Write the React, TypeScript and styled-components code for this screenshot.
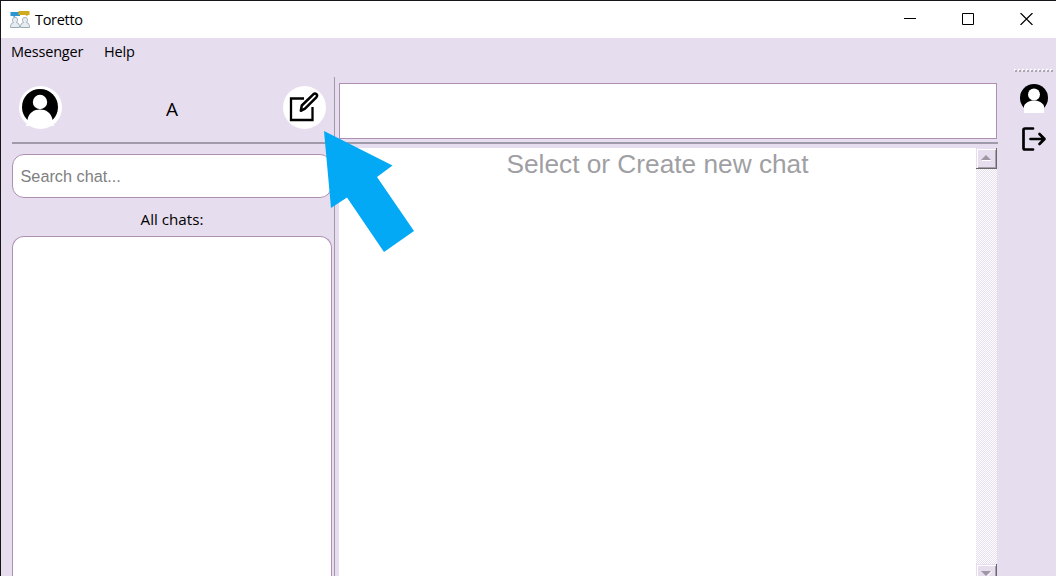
import React from 'react';
import styled, { createGlobalStyle } from 'styled-components';

const LILAC = '#e6ddee';
const BORDER = '#b08fb5';
const RULE = '#a09aaa';

const GlobalStyle = createGlobalStyle`
  * { box-sizing: border-box; }
  body { margin: 0; overflow: hidden; }
`;

const Window = styled.div`
  position: relative;
  display: flex;
  flex-direction: column;
  width: 1056px;
  height: 576px;
  overflow: hidden;
  border-top: 1px solid #17151a;
  border-left: 1px solid #17151a;
  background: ${LILAC};
  color: #000;
  font: 15px/20px 'Open Sans', 'Noto Sans', sans-serif;
`;

const TitleBar = styled.header`
  display: flex;
  align-items: center;
  height: 37px;
  flex: none;
  padding-left: 9px;
  background: #fff;
`;

const Title = styled.span<{ $spacing: number }>`
  flex: 1;
  margin-left: 5px;
  font-size: 14.5px;
  letter-spacing: ${(p) => p.$spacing}px;
`;

const WindowControls = styled.div`
  display: flex;
  gap: 46px;
  padding-right: 23px;
  margin-top: -1px;
  svg { display: block; }
`;

const MenuBar = styled.nav`
  display: flex;
  gap: 20px;
  height: 28px;
  flex: none;
  padding: 4px 0 0 10px;
`;

const MenuItem = styled.span<{ $width: number; $spacing: number }>`
  width: ${(p) => p.$width}px;
  white-space: nowrap;
  font-size: 14.5px;
  letter-spacing: ${(p) => p.$spacing}px;
`;

const Body = styled.div`
  display: flex;
  flex: 1;
  min-height: 0;
  padding-left: 11px;
`;

const Sidebar = styled.aside`
  display: flex;
  flex-direction: column;
  width: 322px;
  margin-top: 11px;
`;

const Profile = styled.div`
  display: flex;
  align-items: center;
  justify-content: space-between;
  height: 65px;
  padding: 0 8px 4px 7px;
`;

const RoundButton = styled.button`
  width: 43px;
  height: 43px;
  padding: 0;
  border: 0;
  border-radius: 50%;
  background: #fff;
  svg { display: block; }
`;

const UserName = styled.span`
  font-size: 19px;
  line-height: 26px;
  padding: 3px 1px 0 0;
`;

const Rule = styled.div`
  height: 2px;
  flex: none;
  background: ${RULE};
`;

const Search = styled.input`
  width: 320px;
  height: 44px;
  flex: none;
  margin-top: 10px;
  padding: 0 7.5px;
  border: 1px solid ${BORDER};
  border-radius: 12px;
  background: #fff;
  font: 16.25px 'Liberation Sans', Arial, sans-serif;
  &::placeholder { color: #808080; opacity: 1; }
`;

const ListLabel = styled.div`
  width: 320px;
  height: 38px;
  flex: none;
  padding-top: 11px;
  text-align: center;
  font-size: 15.2px;
`;

const ChatList = styled.div`
  width: 320px;
  flex: 1;
  border: 1px solid ${BORDER};
  border-bottom: 0;
  border-radius: 12px 12px 0 0;
  background: #fff;
`;

const Divider = styled.div`
  width: 1px;
  margin-top: 11px;
  background: ${RULE};
`;

const Conversation = styled.main`
  display: flex;
  flex-direction: column;
  width: 663px;
  padding-top: 17px;
`;

const ChatHeader = styled.div`
  height: 56px;
  flex: none;
  margin: 0 1px 3px 4px;
  border: 1px solid ${BORDER};
  background: #fff;
`;

const ChatArea = styled.div`
  display: flex;
  flex: 1;
  margin: 4px 1px 0 4px;
  background: #fff;
`;

const Prompt = styled.div`
  flex: 1;
  padding-top: 1px;
  text-align: center;
  color: #9f9fa4;
  font: 26.25px/30px 'Liberation Sans', Arial, sans-serif;
`;

const ScrollBar = styled.div`
  display: flex;
  flex-direction: column;
  justify-content: space-between;
  width: 21px;
  background: repeating-conic-gradient(${LILAC} 0 25%, #fff 0 50%) 0 0 / 2px 2px;
`;

const ScrollButton = styled.div<{ $cut?: boolean }>`
  display: flex;
  justify-content: center;
  align-items: flex-start;
  height: ${(p) => (p.$cut ? 12 : 21)}px;
  padding-top: 6px;
  border: solid;
  border-width: ${(p) => (p.$cut ? '0 1px 0 0' : '0 1px 1px 0')};
  border-color: #696969;
  background: ${LILAC};
  box-shadow: inset 1px 1px ${LILAC}, inset 2px 2px #fff, inset -1px ${(p) => (p.$cut ? 0 : -1)}px #a7a1ac;
`;

const ToolBar = styled.div`
  display: flex;
  flex-direction: column;
  align-items: center;
  width: 48px;
  margin-left: 10px;
  padding-left: 3px;
  svg { display: block; flex: none; }
`;

const Handle = styled.div`
  width: 39px;
  height: 3px;
  margin: 3px 0 12px;
  background:
    radial-gradient(circle at 2px 2px, #aaa5b1 1px, transparent 1.1px) 0 0 / 4px 3px,
    radial-gradient(circle at 1px 1px, #fff 1px, transparent 1.1px) 0 0 / 4px 3px;
`;

const LogoutIcon = styled.svg`
  margin-top: 13px;
`;

const Pointer = styled.svg`
  position: absolute;
  left: 322px;
  top: 129px;
`;

const AppLogo = () => (
  <svg width="20" height="20" viewBox="0 0 20 20">
    <path d="M.5 2h9.500v4H5.500l-2 1.500V6h-3z" fill="#2c94cf" />
    <path d="M8.500 1h11v4h-2v1.500l-2-1.500h-7z" fill="#d0aa20" />
    <g fill="#e6edf2" stroke="#9dabb5" strokeWidth="1">
      <path d="M.5 17.500c0-3.200 1-4.500 3-5-2-2.500-1-5 1.500-5s3.500 2.500 1.500 5c2 .5 3 1.800 3 5z" />
      <path d="M10.500 17.500c0-3.200 1-4.500 3-5-2-2.500-1-5 1.500-5s3.500 2.500 1.500 5c2 .5 3 1.800 3 5z" />
    </g>
  </svg>
);

const EditIcon = () => (
  <svg width="43" height="43" viewBox="0 0 43 43" fill="none" stroke="#000">
    <path d="M21 12.500H8v21.500h21.500V21" strokeWidth="2.300" />
    <path d="M17.800 24.800l1-5.300L30.300 8.300c2.300-2 5 .6 3 3L22 22.700z" strokeWidth="2.500" strokeLinejoin="round" />
  </svg>
);

const App = () => (
  <>
    <GlobalStyle />
    <Window>
      <TitleBar>
        <AppLogo />
        <Title $spacing={-0.3}>Toretto</Title>
        <WindowControls>
          <svg width="12" height="12"><path d="M0 5.500h12" stroke="#000" /></svg>
          <svg width="12" height="12"><path d="M.5.5h11v11H.5z" fill="none" stroke="#000" /></svg>
          <svg width="13" height="12"><path d="M.5 0l12 12M12.500 0l-12 12" stroke="#000" strokeWidth="1.200" /></svg>
        </WindowControls>
      </TitleBar>
      <MenuBar>
        <MenuItem $width={73} $spacing={-0.2}>Messenger</MenuItem>
        <MenuItem $width={31} $spacing={-0.2}>Help</MenuItem>
      </MenuBar>
      <Body>
        <Sidebar>
          <Profile>
            <RoundButton aria-label="Profile">
              <svg width="43" height="43" viewBox="0 0 43 43">
                <circle cx="21" cy="21" r="18" />
                <circle cx="21" cy="16" r="7.200" fill="#fff" />
                <path d="M7 40l1.500-6.500C10 26.500 15 23.500 21 23.500s11 3 12.500 10L35 40z" fill="#fff" />
              </svg>
            </RoundButton>
            <UserName>A</UserName>
            <RoundButton aria-label="New chat"><EditIcon /></RoundButton>
          </Profile>
          <Rule />
          <Search placeholder="Search chat..." />
          <ListLabel>All chats:</ListLabel>
          <ChatList />
        </Sidebar>
        <Divider />
        <Conversation>
          <ChatHeader />
          <Rule />
          <ChatArea>
            <Prompt>Select or Create new chat</Prompt>
            <ScrollBar>
              <ScrollButton>
                <svg width="11" height="8"><path d="M1 6h9v1H1z" fill="#fff" /><path d="M0 6l5-5 5 5z" fill="#9e98a4" /></svg>
              </ScrollButton>
              <ScrollButton $cut>
                <svg width="11" height="6"><path d="M6 6l5-5v1L7 6z" fill="#fff" /><path d="M0 1h10L5 6z" fill="#9e98a4" /></svg>
              </ScrollButton>
            </ScrollBar>
          </ChatArea>
        </Conversation>
        <ToolBar>
          <Handle />
          <svg width="28" height="29" viewBox="0 0 28 29">
            <circle cx="14" cy="14" r="14" />
            <circle cx="14" cy="10.500" r="6" fill="#fff" />
            <path d="M4 29v-7c2-4 6-5.500 10-5.500s8 1.500 10 5.500v7z" fill="#fff" />
          </svg>
          <LogoutIcon width="26" height="26" viewBox="0 0 26 26" fill="none" stroke="#000" strokeWidth="2.700" strokeLinecap="round" strokeLinejoin="round">
            <path d="M12 2.500H4Q2.500 2.500 2.500 4v18q0 1.500 1.500 1.500H12M9.500 13H23M18.500 8l5 5-5 5" />
          </LogoutIcon>
        </ToolBar>
      </Body>
      <Pointer width="92" height="124" viewBox="323 130 92 124">
        <path d="M324 131L392.500 165.500 377 177 414 231 384 252 347 197.500 331 208z" fill="#03a9f4" />
      </Pointer>
    </Window>
  </>
);

export default App;
